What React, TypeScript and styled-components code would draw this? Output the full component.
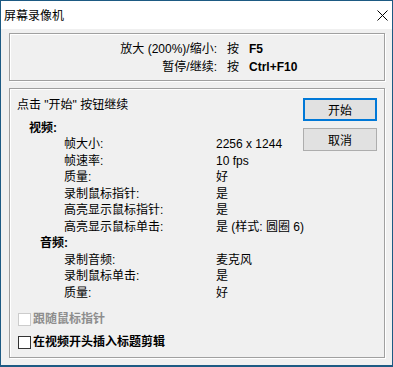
import React from "react";
import styled, { createGlobalStyle } from "styled-components";

const GlobalStyle = createGlobalStyle`
  html, body {
    margin: 0;
    padding: 0;
    background: #f0f0f0;
  }
  * {
    box-sizing: border-box;
  }
`;

const Window = styled.div`
  width: 393px;
  height: 367px;
  border: 1px solid #1d5a83;
  border-bottom-width: 2px;
  background: #f0f0f0;
  display: flex;
  flex-direction: column;
  font-family: "Liberation Sans", "Noto Sans CJK SC", sans-serif;
  font-size: 12px;
  color: #000;
`;

const TitleBar = styled.div`
  height: 28px;
  background: #fff;
  display: flex;
  align-items: center;
  justify-content: space-between;
  padding-left: 3px;
  padding-bottom: 2px;
`;

const Title = styled.span`
  font-family: "Noto Sans CJK SC", sans-serif;
  font-size: 12px;
`;

const CloseButton = styled.div`
  width: 46px;
  height: 100%;
  display: flex;
  align-items: center;
  justify-content: center;
  margin-right: -13px;
  margin-top: 2px;
`;

const Body = styled.div`
  flex: 1;
  padding: 4px 7px 0 8px;
`;

const GroupBox = styled.div<{ $height: number; $top: number }>`
  height: ${(p) => p.$height}px;
  margin-top: ${(p) => p.$top}px;
  border: 1px solid #a0a0a0;
  box-shadow: 1px 1px 0 #fff, inset 1px 1px 0 #fff;
`;

const HotkeyGrid = styled.div`
  display: grid;
  grid-template-columns: 207px 12px auto;
  column-gap: 10px;
  padding-top: 6px;
  line-height: 18px;
`;

const HotkeyLabel = styled.span`
  text-align: right;
`;

const Key = styled.span`
  font-weight: bold;
  font-family: "Liberation Sans", sans-serif;
  font-size: 12px;
`;

const MainRow = styled.div`
  display: flex;
  padding: 8px 7px 0 7px;
`;

const InfoColumn = styled.div`
  flex: 1;
  min-width: 0;
  white-space: nowrap;
`;

const Intro = styled.div`
  line-height: 17px;
  margin-bottom: 6px;
`;

const SectionHeading = styled.div<{ $indent: number }>`
  font-weight: bold;
  line-height: 16.45px;
  padding-left: ${(p) => p.$indent}px;
`;

const InfoRow = styled.div`
  display: grid;
  grid-template-columns: 152px auto;
  padding-left: 47px;
  line-height: 16.45px;
`;

const ButtonColumn = styled.div`
  display: flex;
  flex-direction: column;
  gap: 7px;
  margin-top: 1px;
`;

const DialogButton = styled.button<{ $default?: boolean }>`
  width: 74px;
  height: 23px;
  background: #e1e1e1;
  border: ${(p) => (p.$default ? "2px solid #0078d7" : "1px solid #adadad")};
  font-family: "Noto Sans CJK SC", sans-serif;
  font-size: 12px;
  color: #000;
  padding: 0;
  line-height: 1;
`;

const CheckList = styled.div`
  display: flex;
  flex-direction: column;
  gap: 10px;
  margin-top: 12px;
  padding-left: 1px;
`;

const CheckRow = styled.label<{ $disabled?: boolean }>`
  display: flex;
  align-items: center;
  gap: 2px;
  font-weight: bold;
  line-height: 13px;
  color: ${(p) => (p.$disabled ? "#8d8d8d" : "#000")};
`;

const CheckBox = styled.span<{ $disabled?: boolean }>`
  width: 13px;
  height: 13px;
  border: 1px solid ${(p) => (p.$disabled ? "#cccccc" : "#333")};
  background: #fff;
  flex-shrink: 0;
`;

const videoRows = [
  ["帧大小:", "2256 x 1244"],
  ["帧速率:", "10 fps"],
  ["质量:", "好"],
  ["录制鼠标指针:", "是"],
  ["高亮显示鼠标指针:", "是"],
  ["高亮显示鼠标单击:", "是 (样式: 圆圈 6)"],
];

const audioRows = [
  ["录制音频:", "麦克风"],
  ["录制鼠标单击:", "是"],
  ["质量:", "好"],
];

export default function App() {
  return (
    <>
      <GlobalStyle />
      <Window>
        <TitleBar>
          <Title>屏幕录像机</Title>
          <CloseButton>
            <svg width="11" height="11" viewBox="0 0 11 11">
              <path d="M0.5 0.5L10.5 10.5M10.5 0.5L0.5 10.5" stroke="#000" strokeWidth="1" />
            </svg>
          </CloseButton>
        </TitleBar>
        <Body>
          <GroupBox $height={48} $top={0}>
            <HotkeyGrid>
              <HotkeyLabel>放大 (200%)/缩小:</HotkeyLabel>
              <span>按</span>
              <Key>F5</Key>
              <HotkeyLabel>暂停/继续:</HotkeyLabel>
              <span>按</span>
              <Key>Ctrl+F10</Key>
            </HotkeyGrid>
          </GroupBox>
          <GroupBox $height={270} $top={7}>
            <MainRow>
              <InfoColumn>
                <Intro>点击 "开始" 按钮继续</Intro>
                <SectionHeading $indent={12}>视频:</SectionHeading>
                {videoRows.map(([label, value]) => (
                  <InfoRow key={label}>
                    <span>{label}</span>
                    <span>{value}</span>
                  </InfoRow>
                ))}
                <SectionHeading $indent={23}>音频:</SectionHeading>
                {audioRows.map(([label, value], i) => (
                  <InfoRow key={i}>
                    <span>{label}</span>
                    <span>{value}</span>
                  </InfoRow>
                ))}
                <CheckList>
                  <CheckRow $disabled>
                    <CheckBox $disabled />
                    跟随鼠标指针
                  </CheckRow>
                  <CheckRow>
                    <CheckBox />
                    在视频开头插入标题剪辑
                  </CheckRow>
                </CheckList>
              </InfoColumn>
              <ButtonColumn>
                <DialogButton $default>开始</DialogButton>
                <DialogButton>取消</DialogButton>
              </ButtonColumn>
            </MainRow>
          </GroupBox>
        </Body>
      </Window>
    </>
  );
}
